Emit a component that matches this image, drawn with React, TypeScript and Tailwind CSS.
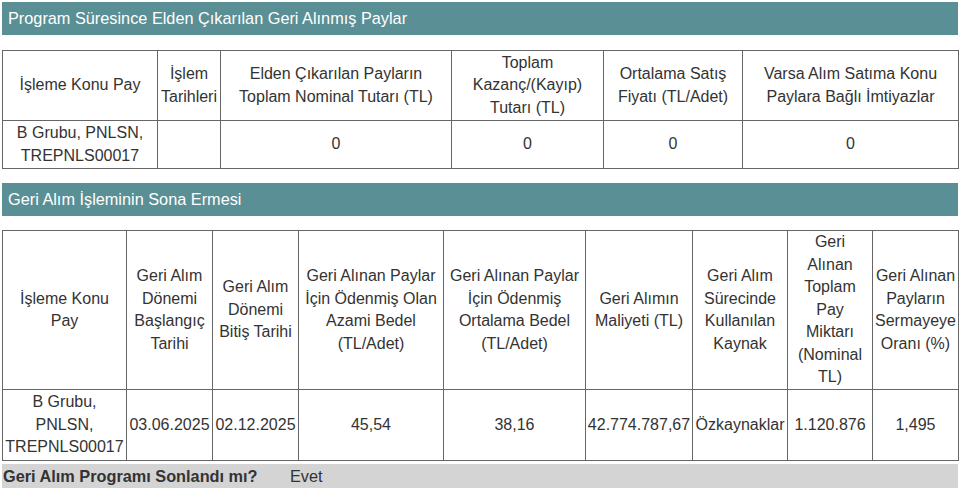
import React from "react";

const font = { fontFamily: '"Liberation Sans", Arial, sans-serif' };

function Bar({ title }: { title: string }) {
  return (
    <div className="h-[33px] bg-[#5a8f95] text-white text-[16.3px] flex items-center pl-[6px]">
      {title}
    </div>
  );
}

const td = "border border-[#666] text-center align-middle px-[1px] py-0 leading-[22.5px] text-[16px] text-[#333]";

export default function App() {
  const t1w = [155, 63, 231, 152, 139, 216];
  const t2w = [124, 86, 86, 145, 142, 107, 95, 85, 86];
  return (
    <div className="bg-white w-[960px] h-[493px] px-[2px] pt-[2px]" style={font}>
      <Bar title="Program Süresince Elden Çıkarılan Geri Alınmış Paylar" />
      <table className="mt-[15px] w-[956px] table-fixed border-collapse">
        <colgroup>
          {t1w.map((w, i) => (
            <col key={i} style={{ width: w }} />
          ))}
        </colgroup>
        <tbody>
          <tr className="h-[70px]">
            <td className={td}>İşleme Konu Pay</td>
            <td className={td}>İşlem Tarihleri</td>
            <td className={td}>Elden Çıkarılan Payların Toplam Nominal Tutarı (TL)</td>
            <td className={td}>Toplam Kazanç/(Kayıp) Tutarı (TL)</td>
            <td className={td}>Ortalama Satış Fiyatı (TL/Adet)</td>
            <td className={td}>Varsa Alım Satıma Konu Paylara Bağlı İmtiyazlar</td>
          </tr>
          <tr className="h-[48px]">
            <td className={td}>B Grubu, PNLSN, TREPNLS00017</td>
            <td className={td}></td>
            <td className={td}>0</td>
            <td className={td}>0</td>
            <td className={td}>0</td>
            <td className={td}>0</td>
          </tr>
        </tbody>
      </table>
      <div className="mt-[14px]">
        <Bar title="Geri Alım İşleminin Sona Ermesi" />
      </div>
      <table className="mt-[14px] w-[956px] table-fixed border-collapse">
        <colgroup>
          {t2w.map((w, i) => (
            <col key={i} style={{ width: w }} />
          ))}
        </colgroup>
        <tbody>
          <tr className="h-[159px]">
            <td className={td}>
              İşleme Konu
              <br />
              Pay
            </td>
            <td className={td}>Geri Alım Dönemi Başlangıç Tarihi</td>
            <td className={td}>Geri Alım Dönemi Bitiş Tarihi</td>
            <td className={td}>Geri Alınan Paylar İçin Ödenmiş Olan Azami Bedel (TL/Adet)</td>
            <td className={td}>Geri Alınan Paylar İçin Ödenmiş Ortalama Bedel (TL/Adet)</td>
            <td className={td}>Geri Alımın Maliyeti (TL)</td>
            <td className={td}>Geri Alım Sürecinde Kullanılan Kaynak</td>
            <td className={td}>
              Geri
              <br />
              Alınan
              <br />
              Toplam
              <br />
              Pay
              <br />
              Miktarı
              <br />
              (Nominal
              <br />
              TL)
            </td>
            <td className={td}>Geri Alınan Payların Sermayeye Oranı (%)</td>
          </tr>
          <tr className="h-[71px]">
            <td className={td}>B Grubu, PNLSN, TREPNLS00017</td>
            <td className={td}>03.06.2025</td>
            <td className={td}>02.12.2025</td>
            <td className={td}>45,54</td>
            <td className={td}>38,16</td>
            <td className={td}>42.774.787,67</td>
            <td className={td}>Özkaynaklar</td>
            <td className={td}>1.120.876</td>
            <td className={td}>1,495</td>
          </tr>
        </tbody>
      </table>
      <div className="mt-[3px] h-[24px] bg-[#d4d4d4] flex items-center text-[16.3px] text-[#333]">
        <span className="font-bold w-[288px] pl-[1px]">Geri Alım Programı Sonlandı mı?</span>
        <span>Evet</span>
      </div>
    </div>
  );
}
